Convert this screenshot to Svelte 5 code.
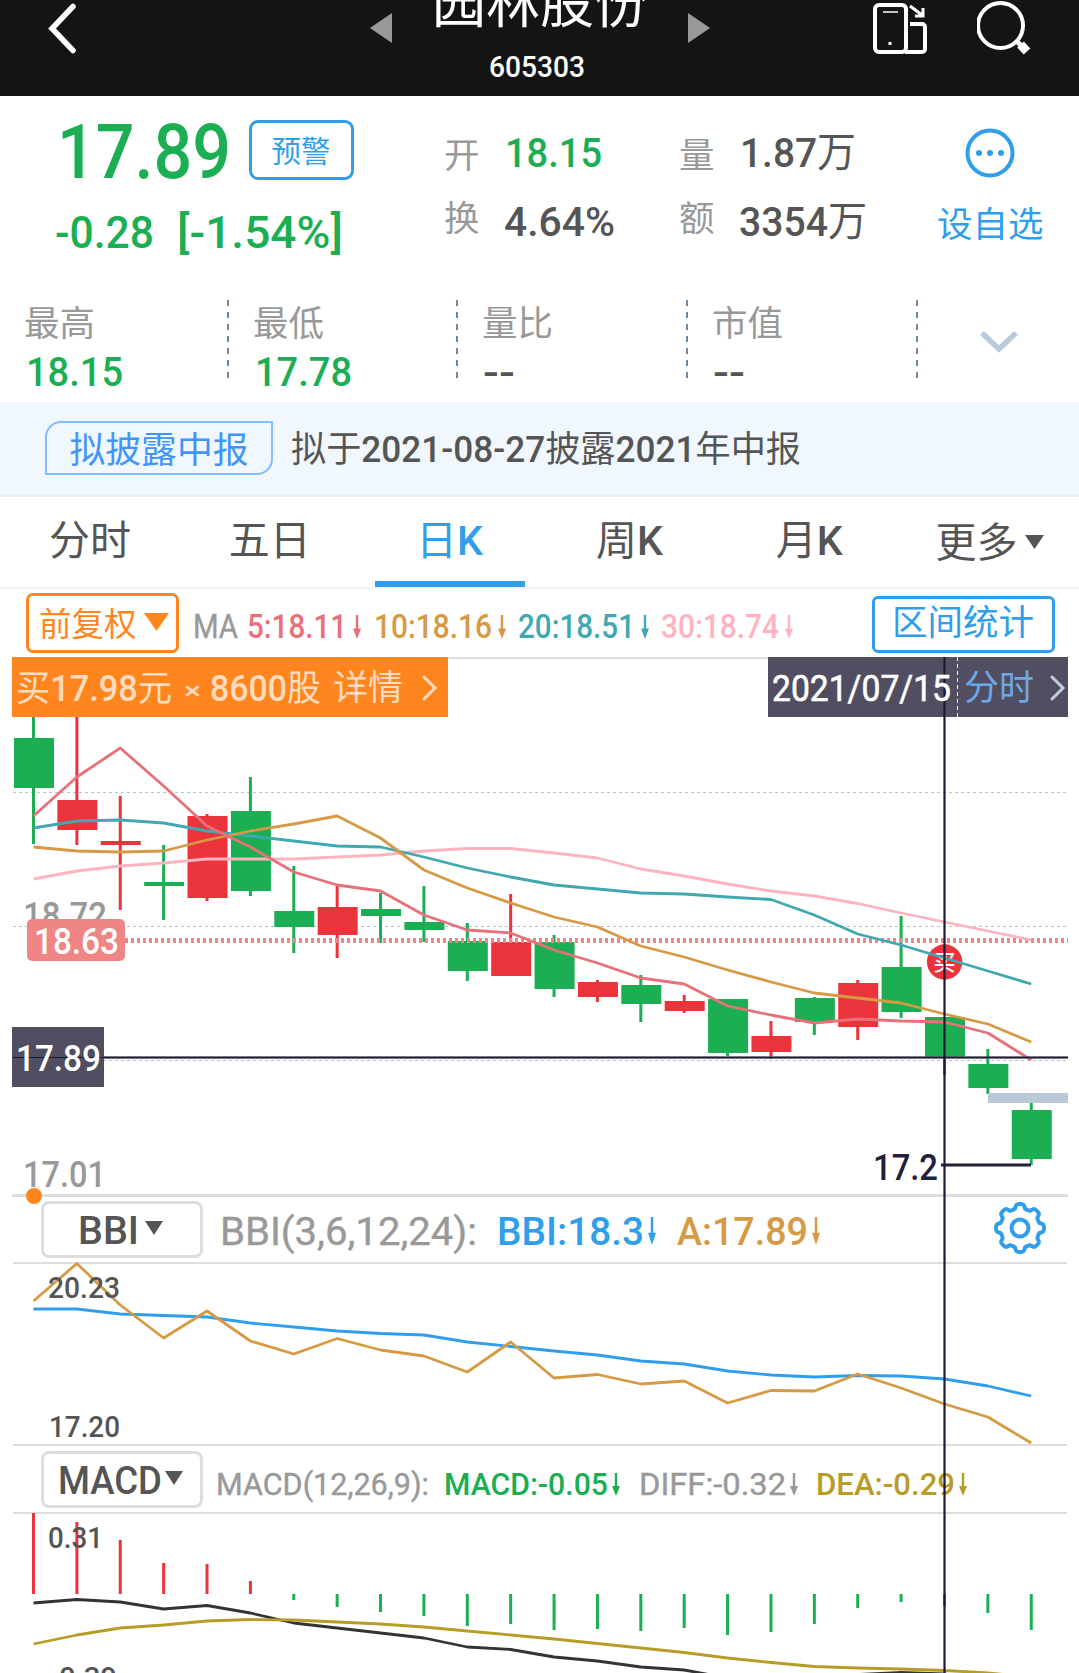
<script>
  const CAP = 0.711; // cap height of the numeric face, in em

  const x = (i) => 33.5 + i * 43.38;
  const points = (ys) => ys.map((y, i) => `${x(i)},${y}`).join(' ');

  // Splits a string into Latin and Chinese runs, which carry different weights
  const runs = (text) => text.split(/([\u4e00-\u9fff]+)/).filter(Boolean);
  const isHan = (run) => /[\u4e00-\u9fff]/.test(run);

  // [direction, high, low, body top, body bottom]
  const candles = [
    ['g', 700, 844, 738, 788], ['r', 700, 845, 800, 830], ['r', 796, 910, 841, 845], ['g', 845, 920, 882, 886],
    ['r', 814, 901, 816, 898], ['g', 777, 896, 811, 891], ['g', 866, 953, 911, 927], ['r', 886, 958, 907, 935],
    ['g', 893, 943, 909, 916], ['g', 886, 942, 922, 930], ['g', 923, 981, 941, 971], ['r', 894, 976, 942, 976],
    ['g', 935, 997, 942, 989], ['r', 980, 1002, 982, 997], ['g', 975, 1022, 985, 1004], ['r', 995, 1013, 1001, 1011],
    ['g', 999, 1056, 999, 1053], ['r', 1021, 1059, 1036, 1052], ['g', 997, 1035, 998, 1022], ['r', 980, 1040, 983, 1027],
    ['g', 916, 1018, 967, 1012], ['g', 1017, 1075, 1017, 1057], ['g', 1049, 1094, 1064, 1088], ['g', 1103, 1165, 1110, 1159]
  ];

  const averages = [
    { cls: 'ma30', ys: [879, 871, 866, 863, 859, 859, 859, 857, 855, 851, 848.5, 848.5, 853, 858, 869, 876, 884, 891, 896, 903.5, 913, 922, 931, 940] },
    { cls: 'ma20', ys: [828, 821, 820, 823, 831, 836, 841, 846, 847, 857, 868, 877, 885, 889, 893, 894, 897, 899.5, 915, 934, 945, 958, 971, 984] },
    { cls: 'ma10', ys: [847, 851, 852, 851, 840, 831, 824, 816, 838, 870, 888, 903, 917, 927, 946, 957, 970, 982, 993, 998, 1003, 1014, 1024, 1042] },
    { cls: 'ma5', ys: [816, 777, 748, 786, 826, 847, 872, 885, 891, 915, 930, 933, 950, 963, 978, 984, 1006, 1015, 1023, 1019, 1021, 1022, 1033, 1060] }
  ];

  const bbi = [1309, 1309, 1314, 1315.5, 1317, 1323, 1327, 1331, 1333.5, 1335, 1342, 1346.5, 1351, 1355, 1361, 1364, 1371, 1375, 1377, 1375.5, 1376, 1379, 1386, 1396];
  const bbiA = [1301, 1263.5, 1305, 1338, 1311, 1341, 1354, 1338.5, 1350, 1356, 1372, 1342, 1378, 1374.5, 1384, 1381, 1403, 1390.5, 1391, 1374, 1388, 1404, 1417, 1443];

  const macd = [1513, 1522, 1540, 1563, 1564, 1581, 1600, 1607, 1612, 1616, 1626, 1624, 1630, 1629, 1631, 1628, 1635, 1632, 1624, 1608, 1602, 1606, 1613, 1630];
  const ZERO = 1594;
  const diff = [1603, 1599.5, 1602, 1609, 1605.5, 1613, 1623, 1628, 1633, 1638, 1647, 1649.5, 1657, 1661, 1667, 1670, 1678, 1680, 1677, 1674.5, 1672.5, 1674, 1680, 1688];
  const dea = [1644, 1635, 1628, 1625, 1621, 1619.5, 1620, 1622, 1624, 1627, 1631, 1635, 1639, 1643.5, 1648, 1652.5, 1658, 1662.5, 1666.5, 1668, 1669, 1670.5, 1673, 1677];

  const legend = [
    { text: '5:18.11', w: 100, cls: 'c5' },
    { text: '10:18.16', w: 118, cls: 'c10' },
    { text: '20:18.51', w: 117, cls: 'c20' },
    { text: '30:18.74', w: 118, cls: 'c30' }
  ];
</script>

<!-- Text squeezed to a fixed width; the box is exactly one cap height tall -->
{#snippet fit(text, w, cap, cls = '')}
  <svg class="fit {cls}" width={w} height={cap}>
    <text x="0" y={cap} font-size={cap / CAP} textLength={w} lengthAdjust="spacingAndGlyphs">{#each runs(text) as run}<tspan class:han={isHan(run)}>{run}</tspan>{/each}</text>
  </svg>
{/snippet}

{#snippet label(text, lx, base, w, cap, cls)}
  <text class={cls} x={lx} y={base} font-size={cap / CAP} textLength={w} lengthAdjust="spacingAndGlyphs">{text}</text>
{/snippet}

{#snippet down(h)}
  <svg class="down" width="8" height={h} viewBox="0 0 8 24" preserveAspectRatio="none">
    <path d="M2.800 0h2.400v13.500H8L4 24 0 13.500h2.800z" />
  </svg>
{/snippet}

{#snippet caret(w, h)}
  <svg class="caret" width={w} height={h} viewBox="0 0 18 13" preserveAspectRatio="none"><path d="M0 0h18L9 13z" /></svg>
{/snippet}

<div class="app">
  <header>
    <svg class="back" width="34" height="57" viewBox="0 0 34 57"><path d="M27 6.500 6 28.500l21 22" /></svg>
    <div class="switcher">
      <svg class="step" width="22" height="30"><path d="M22 0v30L0 15z" /></svg>
      <div class="name">
        <h1>园林股份</h1>
        {@render fit('605303', 96, 21.5, 'white')}
      </div>
      <svg class="step" width="22" height="30"><path d="M0 0v30l22-15z" /></svg>
    </div>
    <svg class="rotate" width="56" height="56" viewBox="0 0 56 56">
      <rect x="3" y="5" width="31" height="47" rx="4" />
      <path d="M38 24h12a3 3 0 0 1 3 3v22a3 3 0 0 1-3 3H33" />
      <path class="thin" d="M11 12h15" />
      <path class="tip" d="M38 6l12 9M51 8v8h-8" />
      <rect class="dot" x="16.500" y="42" width="3" height="3" />
    </svg>
    <svg class="search" width="60" height="60" viewBox="0 0 60 60">
      <circle cx="23.500" cy="25.500" r="22.500" />
      <path d="M39.500 41l5 5" /><path class="grip" d="M43.500 44.500l6.500 7" />
    </svg>
  </header>

  <section class="quote">
    <div class="price">
      <div class="now">
        {@render fit('17.89', 174, 54, 'green')}
        <button class="alert">预警</button>
      </div>
      <div class="change">
        {@render fit('-0.28', 99, 31, 'green')}
        {@render fit('[-1.54%]', 166, 31, 'green')}
      </div>
    </div>
    <dl>
      <dt>开</dt><dd>{@render fit('18.15', 97, 29.5, 'green')}</dd>
      <dt>换</dt><dd class="low">{@render fit('4.64%', 111, 29.5, 'ink')}</dd>
    </dl>
    <dl>
      <dt>量</dt><dd>{@render fit('1.87万', 116, 29.5, 'ink')}</dd>
      <dt>额</dt><dd class="low">{@render fit('3354万', 128, 29.5, 'ink')}</dd>
    </dl>
    <div class="watch">
      <svg width="50" height="50" viewBox="0 0 50 50">
        <circle class="ring" cx="25" cy="25" r="22.500" />
        <circle cx="14" cy="25" r="3" /><circle cx="25" cy="25" r="3" /><circle cx="36" cy="25" r="3" />
      </svg>
      <span>设自选</span>
    </div>
  </section>

  <section class="stats">
    <div class="stat"><span>最高</span>{@render fit('18.15', 97, 29.3, 'green')}</div>
    <div class="stat"><span>最低</span>{@render fit('17.78', 97, 29.3, 'green')}</div>
    <div class="stat"><span>量比</span>{@render fit('--', 32, 29.3, 'ink dashes')}</div>
    <div class="stat"><span>市值</span>{@render fit('--', 32, 29.3, 'ink dashes')}</div>
    <svg class="expand" width="40" height="24" viewBox="0 0 40 24"><path d="M3 3l17 16L37 3" /></svg>
  </section>

  <section class="notice">
    <span class="badge">拟披露中报</span>
    {@render fit('拟于2021-08-27披露2021年中报', 510, 25.6, 'ink')}
  </section>

  <nav>
    <div class="tab"><span>分时</span></div>
    <div class="tab"><span>五日</span></div>
    <div class="tab active"><span>日<b>K</b></span></div>
    <div class="tab"><span>周<b>K</b></span></div>
    <div class="tab"><span>月<b>K</b></span></div>
    <div class="tab more"><span>更多</span>{@render caret(19, 14)}</div>
  </nav>

  <div class="charts">
    <div class="ma-bar">
      <button class="adjust">前复权 {@render caret(25, 18)}</button>
      <div class="legend">
        {@render fit('MA', 45, 23, 'grey')}
        {#each legend as item}
          <div class="entry {item.cls}">{@render fit(item.text, item.w, 23)}{@render down(24)}</div>
        {/each}
      </div>
      <button class="range">区间统计</button>
    </div>

    <div class="main-panel">
      <svg class="plot" width="1079" height="540" viewBox="0 657 1079 540">
        <path class="rule" d="M12 658H1068" />
        <path class="rule thick" d="M12 1195.500H1068" />
        <path class="grid" d="M13 792.500H1067M13 926.500H1067M13 1060.500H1067" />
        {@render label('18.72', 23, 928, 84, 26, 'grey')}
        {@render label('17.01', 23, 1187, 83, 26, 'grey')}
        {#each candles as [dir, high, low, top, bottom], i}
          <g class={dir}>
            <rect x={x(i) - 1.5} y={high} width="3" height={low - high} />
            <rect x={x(i) - 19.5} y={top} width="40" height={bottom - top} />
          </g>
        {/each}
        <rect class="gap" x="988" y="1093" width="80" height="10" />
        <path class="cost" d="M125 940.500H1068" />
        <circle class="r" cx="944.600" cy="962" r="17.700" />
        <text class="buy" x="944.600" y="970" font-size="22" text-anchor="middle">买</text>
        {#each averages as line}
          <polyline class={line.cls} points={points(line.ys)} />
        {/each}
        <rect class="cost-tag" x="27" y="919" width="98" height="42" rx="5" />
        {@render label('18.63', 34, 954.3, 85, 25.6, 'white')}
        <rect class="cursor-tag" x="12" y="1027" width="92" height="60" />
        <path class="cross" d="M13 1057.500H1068" /><path class="core" d="M13 1057.500H1068" />
        {@render label('17.89', 16, 1071, 85, 25.6, 'white')}
        {@render label('17.2', 873, 1180, 65, 25.6, 'navy')}
        <path class="lowest" d="M941 1165H1031" />
      </svg>
      <div class="trade">
        {@render fit('买17.98元', 156, 25.6)}
        {@render fit('×', 17, 17)}
        {@render fit('8600股', 111, 25.6)}
        {@render fit('详情', 70, 25.2)}
        <svg class="chev" width="16" height="26" viewBox="0 0 16 26"><path d="M2 2l11 11L2 24" /></svg>
      </div>
      <div class="date">
        <div class="day">{@render fit('2021/07/15', 179, 25.6)}</div>
        {@render fit('分时', 70, 25.2, 'link')}
        <svg class="chev" width="16" height="26" viewBox="0 0 16 26"><path d="M2 2l11 11L2 24" /></svg>
      </div>
    </div>

    <div class="indicator-bar bbi">
      <button class="pick">{@render fit('BBI', 61, 28, 'ink')}{@render caret(18, 14)}</button>
      {@render fit('BBI(3,6,12,24):', 257, 27.7, 'grey')}
      <div class="entry blue">{@render fit('BBI:18.3', 147, 27.7)}{@render down(28)}</div>
      <div class="entry c10">{@render fit('A:17.89', 131, 27.7)}{@render down(28)}</div>
      <svg class="gear" width="54" height="54" viewBox="-27 -27 54 54">
        <path d="M-5-19.500C-4-23.500-3.500-24 0-24S4-23.500 5-19.500Q7-17.500 10.300-17.300C13.800-19.500 14.500-19.500 17-17S19.500-13.800 17.300-10.300Q17.500-7 19.500-5C23.500-4 24-3.500 24 0S23.500 4 19.500 5Q17.500 7 17.300 10.300C19.500 13.800 19.500 14.500 17 17S13.800 19.500 10.300 17.300Q7 17.500 5 19.500C4 23.500 3.500 24 0 24S-4 23.500-5 19.500Q-7 17.500-10.300 17.300C-13.800 19.500-14.500 19.500-17 17S-19.500 13.800-17.300 10.300Q-17.500 7-19.500 5C-23.500 4-24 3.500-24 0S-23.500-4-19.500-5Q-17.500-7-17.300-10.300C-19.500-13.800-19.500-14.500-17-17S-13.800-19.500-10.300-17.300Q-7-17.500-5-19.500z" />
        <circle r="8.500" />
      </svg>
    </div>

    <svg class="plot" width="1079" height="184" viewBox="0 1262 1079 184">
      <path class="rule" d="M13 1263H1067M13 1445H1067" />
      <polyline class="bbi-line" points={points(bbi)} />
      <polyline class="ma10" points={points(bbiA)} />
      {@render label('20.23', 48, 1298, 72, 21.3, 'ink')}
      {@render label('17.20', 49, 1437, 71, 21.3, 'ink')}
    </svg>

    <div class="indicator-bar macd">
      <button class="pick">{@render fit('MACD', 104, 28, 'ink')}{@render caret(18, 14)}</button>
      {@render fit('MACD(12,26,9):', 213, 22.2, 'grey')}
      <div class="entry green">{@render fit('MACD:-0.05', 164, 22.2)}{@render down(23)}</div>
      <div class="entry grey">{@render fit('DIFF:-0.32', 147, 22.2)}{@render down(23)}</div>
      <div class="entry olive">{@render fit('DEA:-0.29', 139, 22.2)}{@render down(23)}</div>
    </div>

    <svg class="plot" width="1079" height="161" viewBox="0 1512 1079 161">
      <path class="rule" d="M13 1513H1067" />
      {#each macd as y, i}
        <rect class={y < ZERO ? 'r' : 'g'} x={x(i) - 1.5} y={Math.min(y, ZERO)} width="3" height={Math.abs(y - ZERO)} />
      {/each}
      <polyline class="diff" points={points(diff)} />
      <polyline class="dea" points={points(dea)} />
      {@render label('0.31', 48, 1548, 55, 21.3, 'ink')}
      {@render label('-0.39', 49, 1688, 68, 21.3, 'ink')}
    </svg>

    <svg class="crosshair" width="3" height="1016"><rect class="edge" width="3" height="1016" /><rect x="1" width="1" height="1016" /></svg>
    <span class="marker"></span>
  </div>
</div>

<style>
  :global(body) { margin: 0; background: #fff; }

  .app {
    width: 1079px;
    height: 1673px;
    overflow: hidden;
    background: #fff;
    color: #555;
    font-family: "Noto Sans CJK SC", sans-serif;
  }
  svg { display: block; flex: none; }
  button { box-sizing: border-box; background: #fff; padding: 0; font: inherit; display: flex; }

  .fit { overflow: visible; fill: currentColor; }
  text { font-family: Roboto, "Noto Sans CJK SC", sans-serif; font-weight: 500; white-space: pre; }
  .han { font-weight: 400; }
  .white { color: #fff; fill: #fff; }
  .green { color: #1bae52; fill: #1bae52; }
  .grey { color: #999; fill: #999; }
  .ink { color: #555; fill: #555; }
  .fit.grey text, .grey .fit text { font-weight: 400; stroke: #999; stroke-width: 0.400; }
  .navy { fill: #22203a; }
  .blue { color: #309eea; }
  .olive { color: #b79c27; }
  .c5 { color: #e8707a; }
  .c10 { color: #d69a45; }
  .c20 { color: #3fa8b0; }
  .c30 { color: #ffb3bf; }
  .caret, .down { fill: currentColor; }

  header {
    height: 96px;
    display: grid;
    grid-template-columns: 370px 502px 105px 1fr;
    align-items: start;
    background: #141414;
    overflow: hidden;
  }
  header svg path, header svg rect, header svg circle { fill: none; stroke: #fff; }
  header .back { margin-left: 46px; }
  header .back path { stroke-width: 5.500; stroke-linecap: round; }
  .switcher { width: 340px; display: flex; justify-content: space-between; }
  header .step { margin-top: 13px; }
  header .step path { fill: #999; stroke: none; }
  .name { display: flex; flex-direction: column; align-items: center; }
  h1 { margin: -27px 0 28px; height: 54px; font-size: 54px; line-height: 54px; font-weight: 400; color: #fff; white-space: nowrap; }
  .name .fit { margin-right: 6px; }
  header .rotate rect, header .rotate path { stroke-width: 4; }
  header .rotate .thin { stroke-width: 1.500; }
  header .rotate .tip { stroke-width: 3; }
  header .rotate .dot { fill: #fff; stroke: none; }
  header .search circle { stroke-width: 4; }
  header .search path { stroke-width: 5; }
  header .search .grip { stroke-width: 9; }

  .quote { height: 204px; display: grid; grid-template-columns: 445px 235px 258px 1fr; }
  .price { padding-top: 24px; }
  .now { display: flex; padding-left: 57px; }
  .now .fit { margin-top: 4px; }
  .alert {
    width: 105px;
    height: 60px;
    margin-left: 18px;
    padding: 0 1px 3px 0;
    justify-content: center;
    align-items: center;
    border: 3px solid #309eea;
    border-radius: 9px;
    color: #309eea;
    font-size: 29.500px;
    line-height: 30px;
  }
  .change { display: flex; gap: 23px; margin-top: 37px; padding-left: 55px; }
  dl { margin: 0; padding-top: 39px; display: grid; grid-template-columns: 60px 1fr; grid-template-rows: 36px 36px; row-gap: 27px; }
  dt { margin-left: -1px; font-size: 35.500px; line-height: 36px; color: #999; }
  dd { margin: 0; padding-top: 2px; }
  dd.low { padding-top: 8px; margin-left: -1px; }
  .watch { padding-top: 32px; color: #309eea; }
  .watch svg { margin-left: 27px; fill: #309eea; }
  .watch .ring { fill: none; stroke: #309eea; stroke-width: 4; }
  .watch span { display: block; margin: 26px 0 0 -1px; font-size: 35.500px; line-height: 36px; }

  .stats { height: 102px; display: grid; grid-template-columns: 229px 229px 230px 230px 1fr; align-items: start; }
  .stat {
    height: 78px;
    padding-left: 24px;
    background: repeating-linear-gradient(#6b8aa8 0 6px, transparent 6px 12px) right / 2px 78px no-repeat;
  }
  .stat span { display: block; padding-top: 3px; font-size: 35.500px; line-height: 36px; color: #999; }
  .stat .fit { margin: 17.700px 0 0 2px; }
  .stat .dashes { margin: 19px 0 0 1px; }
  .expand { margin: 30px 0 0 61px; fill: none; stroke: #b9cadb; stroke-width: 5.500; }

  .notice {
    box-sizing: border-box;
    height: 95px;
    display: flex;
    align-items: flex-start;
    padding: 19px 0 0 45px;
    background: #f0f7ff;
    border-bottom: 2px solid #ebeef0;
  }
  .badge {
    box-sizing: border-box;
    width: 228px;
    height: 54px;
    border: 2px solid #85bcff;
    border-radius: 16px 0;
    color: #4295f8;
    font-size: 35.800px;
    line-height: 49px;
    text-align: center;
    white-space: nowrap;
  }
  .notice .fit { margin: 15px 0 0 18px; }

  nav { box-sizing: border-box; height: 92px; display: grid; grid-template-columns: repeat(6, 1fr); border-bottom: 2px solid #f3f3f3; }
  .tab { display: flex; justify-content: center; padding-top: 23px; height: 67px; font-size: 41px; line-height: 42px; }
  .tab span { font-family: Roboto, "Noto Sans CJK SC", sans-serif; }
  .tab b { font-weight: 500; }
  .active { color: #309eea; background: linear-gradient(#309eea, #309eea) center bottom / 150px 6px no-repeat; }
  .more { gap: 7px; padding: 25px 0 0 1px; height: 65px; }
  .more .caret { margin-top: 13px; }

  .charts { position: relative; }
  .ma-bar { height: 68px; display: flex; align-items: flex-start; }
  .adjust {
    width: 153px;
    height: 60px;
    margin: 4px 0 0 26px;
    padding: 0 0 2px 10px;
    align-items: center;
    gap: 7px;
    border: 3px solid #ff861f;
    border-radius: 7px;
    color: #ff861f;
    font-size: 32.500px;
    line-height: 40px;
    white-space: nowrap;
  }
  .legend { width: 693px; display: grid; grid-template-columns: 54px 127px 144px 143px 1fr; padding: 26px 0 0 14px; box-sizing: border-box; }
  .entry { display: flex; gap: 6px; }
  .range {
    width: 183px;
    height: 57px;
    margin-top: 7px;
    justify-content: center;
    align-items: center;
    border: 3px solid #309eea;
    border-radius: 6px;
    color: #309eea;
    font-size: 35.500px;
    line-height: 36px;
    padding: 0 1px 9px 0;
  }

  .main-panel { display: grid; grid-template-columns: 12px 436px 320px 300px; grid-template-rows: 60px 480px; }
  .main-panel .plot { grid-area: 1 / 1 / 3 / 5; }
  .trade, .date { display: flex; box-sizing: border-box; padding-top: 18px; align-items: flex-start; }
  .trade { grid-area: 1 / 2; z-index: 1; background: #ff861f; color: #ffdcc0; padding-left: 4px; }
  .trade .fit:nth-child(2) { margin: 7px 9px 0 12px; }
  .trade .fit:nth-child(4) { margin-left: 12px; }
  .trade .chev { margin-left: 19px; }
  .date { grid-area: 1 / 4; background: #504e60; color: #fff; padding: 0 0 0 4px; }
  .date .fit { position: relative; z-index: 3; }
  .day { width: 186px; height: 42px; padding-top: 18px; background: repeating-linear-gradient(#fff 0 4px, transparent 4px 7px) right / 1px 60px no-repeat; }
  .day text { font-weight: 400; stroke: #fff; stroke-width: 0.600; }
  .date .link { margin: 18px 0 0 6px; color: #6ea8e8; }
  .date .chev { margin: 18px 0 0 16px; color: #c0cddd; }
  .chev { fill: none; stroke: currentColor; stroke-width: 3; stroke-linecap: round; }

  .plot polyline { fill: none; stroke-width: 2.800; stroke-linejoin: round; }
  .rule { stroke: #ddd; stroke-width: 2; }
  .rule.thick { stroke-width: 3; }
  .grid { stroke: #b4c7d9; stroke-width: 1; stroke-dasharray: 3 3; }
  .g { fill: #1bae52; }
  .r { fill: #eb333b; }
  .gap { fill: #b9c9d8; }
  .buy { fill: #fff; }
  .cost { stroke: #f08585; stroke-width: 5; stroke-dasharray: 3 3; }
  .cost-tag { fill: #f08585; }
  .cursor-tag { fill: #504e60; }
  .cross { stroke: #504e60; stroke-width: 3; opacity: 0.75; }
  .core { stroke: #1d1b33; stroke-width: 1; }
  .lowest { stroke: #22203a; stroke-width: 3; }
  .ma5 { stroke: #e8707a; }
  .ma10 { stroke: #d69a45; }
  .ma20 { stroke: #3fa8b0; }
  .ma30 { stroke: #ffb3bf; }
  .bbi-line { stroke: #309eea; }
  .diff { stroke: #333; }
  .dea { stroke: #b79c27; }

  .indicator-bar { display: grid; align-items: start; }
  .pick {
    width: 162px;
    height: 57px;
    margin-left: 41px;
    padding-right: 3px;
    justify-content: center;
    align-items: center;
    gap: 6px;
    border: 3px solid #ddd;
    border-radius: 8px;
    color: #555;
  }
  .pick .caret { margin-bottom: 3px; }
  .bbi { height: 61px; padding-top: 4px; grid-template-columns: 220px 277px 180px 317px 1fr; }
  .bbi > .fit, .bbi > .entry { margin-top: 16px; }
  .bbi .entry { gap: 4px; }
  .gear { fill: none; stroke: #309eea; stroke-width: 4; margin-left: -1px; }
  .macd { height: 61px; padding-top: 5px; grid-template-columns: 216px 228px 195px 177px 1fr; }
  .macd > .fit, .macd > .entry { margin-top: 22px; }
  .macd .entry { gap: 4px; }
  .macd .pick { gap: 3px; }

  .crosshair { position: absolute; left: 943px; top: 68px; z-index: 2; fill: #1d1b33; }
  .crosshair .edge { opacity: 0.6; }
  .marker { position: absolute; left: 26px; top: 599px; width: 16px; height: 16px; border-radius: 50%; background: #ff861f; }
</style>
